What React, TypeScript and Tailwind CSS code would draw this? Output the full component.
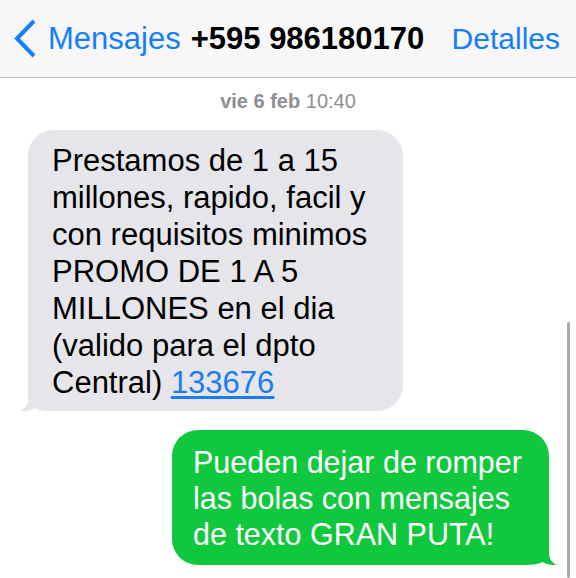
import React from 'react';

const font = { fontFamily: '"Liberation Sans", Arial, sans-serif' };

function Tail({ side, color }: { side: 'left' | 'right'; color: string }) {
  return (
    <svg
      width="34"
      height="26"
      viewBox="0 0 34 26"
      className={side === 'left' ? 'absolute -left-[8px] bottom-0' : 'absolute -right-[8px] bottom-0 -scale-x-100'}
    >
      <path d="M8 0 L8 13 C8 20 5 24 0 26 C6 26.5 11 25 15 23 C18 25 23 26 34 26 L34 0 Z" fill={color} />
    </svg>
  );
}

export default function App() {
  return (
    <div className="relative w-[576px] h-[578px] overflow-hidden bg-white" style={font}>
      {/* Nav bar */}
      <div className="h-[78px] bg-[#f7f7f7] border-b border-[#b9b9bb] flex items-center">
        <svg width="26" height="40" viewBox="0 0 26 40" className="ml-[12px]">
          <polyline points="22,2 5,19.5 22,37" fill="none" stroke="#157efb" strokeWidth="4" />
        </svg>
        <span className="ml-[10px] text-[31px] text-[#157efb] leading-none">Mensajes</span>
        <span className="ml-[10px] text-[31px] font-bold text-black leading-none">+595 986180170</span>
        <span className="ml-auto mr-[16px] text-[30px] text-[#157efb] leading-none">Detalles</span>
      </div>

      {/* Conversation */}
      <div className="flex flex-col">
        <div className="mt-[11px] text-center text-[20px] leading-[24px] text-[#8e8e93]">
          <span className="font-bold">vie 6 feb</span> 10:40
        </div>

        <div className="relative mt-[17px] ml-[28px] w-[375px] rounded-[26px] bg-[#e5e5ea] pl-[24px] pt-[12px] pb-[10px] text-[31px] leading-[37px] text-black whitespace-nowrap">
          <Tail side="left" color="#e5e5ea" />
          <div className="relative">
            Prestamos de 1 a 15<br />
            millones, rapido, facil y<br />
            con requisitos minimos<br />
            PROMO DE 1 A 5<br />
            MILLONES en el dia<br />
            (valido para el dpto<br />
            Central) <span className="text-[#1a7cf5] underline underline-offset-[3px]">133676</span>
          </div>
        </div>

        <div className="relative self-end mt-[19px] mr-[27px] w-[377px] rounded-[26px] bg-[#10c83e] pl-[21px] pt-[14px] pb-[13px] text-[30.5px] leading-[36px] text-white whitespace-nowrap">
          <Tail side="right" color="#10c83e" />
          <div className="relative">
            Pueden dejar de romper<br />
            las bolas con mensajes<br />
            de texto GRAN PUTA!
          </div>
        </div>
      </div>

      {/* Scroll indicator */}
      <div className="absolute right-[6px] top-[322px] bottom-0 w-[3px] rounded-full bg-[#a8a8a8]" />
    </div>
  );
}
